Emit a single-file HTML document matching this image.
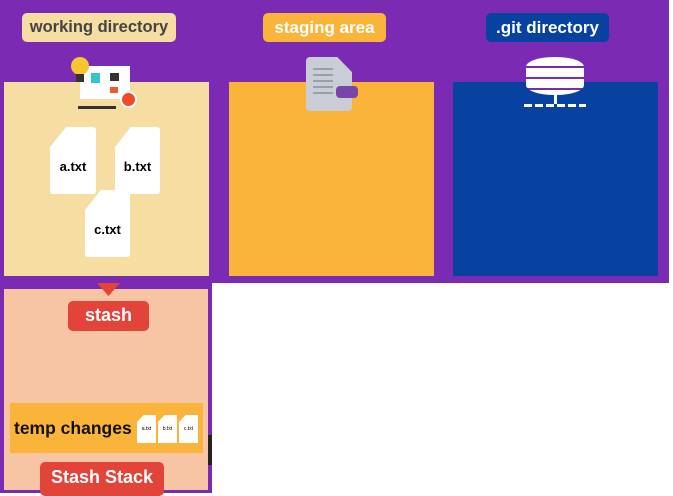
<!DOCTYPE html><html><head><style>
body{margin:0;width:673px;height:493px;background:#fff;position:relative;overflow:hidden;font-family:"Liberation Sans",sans-serif;}
div{position:absolute;box-sizing:border-box}
.lbl{border-radius:5px;font-weight:bold;font-size:17px;text-align:center;line-height:29px}
.f{background:#fff;clip-path:polygon(35% 0,100% 0,100% 100%,0 100%,0 30%);font-weight:bold;font-size:13px;text-align:center;border-radius:3px}
.sf{background:#fff;width:19px;height:28px;top:12px;font-size:5px;line-height:28px;text-align:center;clip-path:polygon(35% 0,100% 0,100% 100%,0 100%,0 25%)}
</style></head><body>
<div style="left:0;top:0;width:669px;height:283px;background:#7b2bb3"></div>
<div style="left:0;top:283px;width:212px;height:210px;background:#7b2bb3"></div>
<div style="left:4px;top:82px;width:205px;height:194px;background:#f6dda1"></div>
<div style="left:229px;top:82px;width:205px;height:194px;background:#fbb43a"></div>
<div style="left:453px;top:82px;width:205px;height:194px;background:#0742a0"></div>
<div class="lbl" style="left:22px;top:13px;width:154px;background:#f6dda1;color:#444;font-size:16.5px">working directory</div>
<div class="lbl" style="left:263px;top:13px;width:123px;background:#fbb43a;color:#fff">staging area</div>
<div class="lbl" style="left:486px;top:13px;width:123px;background:#0742a0;color:#fff">.git directory</div>
<div style="left:80px;top:66px;width:50px;height:33px;background:#fff"></div>
<div style="left:71px;top:57px;width:18px;height:18px;border-radius:50%;background:#f6c531"></div>
<div style="left:76px;top:74px;width:8px;height:8px;background:#333"></div>
<div style="left:91px;top:73px;width:9px;height:10px;background:#35c4cc"></div>
<div style="left:110px;top:73px;width:9px;height:8px;background:#333"></div>
<div style="left:110px;top:87px;width:8px;height:6px;background:#f05a2a"></div>
<div style="left:120px;top:91px;width:17px;height:17px;border-radius:50%;background:#ef4a2a;border:2px solid #fff"></div>
<div style="left:78px;top:106px;width:38px;height:3px;background:#333"></div>
<div class="f" style="left:50px;top:127px;width:46px;height:67px;line-height:80px">a.txt</div>
<div class="f" style="left:115px;top:127px;width:45px;height:67px;line-height:80px">b.txt</div>
<div class="f" style="left:85px;top:190px;width:45px;height:67px;line-height:80px">c.txt</div>
<div style="left:306px;top:57px;width:46px;height:54px;background:#c9ced6;border-radius:4px;clip-path:polygon(0 0,68% 0,100% 28%,100% 100%,0 100%)"></div>
<div style="left:313px;top:68px;width:20px;height:28px;background:repeating-linear-gradient(#9aa0a8 0 2px,transparent 2px 6px)"></div>
<div style="left:336px;top:86px;width:22px;height:12px;border-radius:4px;background:#7b44a8"></div>
<div style="left:526px;top:57px;width:58px;height:38px;border-radius:28px/10px;background:repeating-linear-gradient(#fff 0 9px,#7b2bb3 9px 11px)"></div>
<div style="left:554px;top:94px;width:3px;height:10px;background:#fff"></div>
<div style="left:524px;top:104px;width:62px;height:3px;background:repeating-linear-gradient(90deg,#fff 0 8px,transparent 8px 11px)"></div>
<div style="left:4px;top:289px;width:204px;height:201px;background:#f7c5a3"></div>
<div style="left:97px;top:283px;width:23px;height:13px;background:#e2443a;clip-path:polygon(0 0,100% 0,50% 100%)"></div>
<div class="lbl" style="left:68px;top:301px;width:81px;height:30px;background:#e2443a;color:#fff;font-size:18px">stash</div>
<div style="left:10px;top:403px;width:193px;height:50px;background:#fbb43a"></div>
<div style="left:14px;top:403px;font-weight:bold;font-size:17.5px;line-height:50px;color:#111">temp changes</div>
<div class="sf" style="left:137px;top:415px">a.txt</div>
<div class="sf" style="left:158px;top:415px">b.txt</div>
<div class="sf" style="left:179px;top:415px">c.txt</div>
<div style="left:208px;top:435px;width:4px;height:30px;background:#222"></div>
<div class="lbl" style="left:40px;top:462px;width:124px;height:34px;background:#e2443a;color:#fff;font-size:18px;line-height:30px">Stash Stack</div>
</body></html>
